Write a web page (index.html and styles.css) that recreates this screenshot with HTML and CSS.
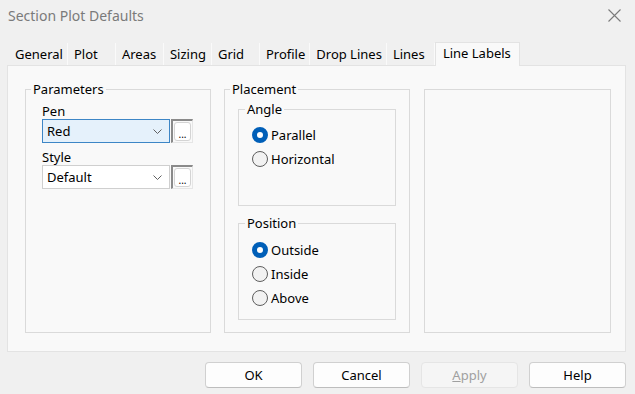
FILE: index.html
```html
<!doctype html>
<html lang="en">
<head>
	<meta charset="UTF-8">
	<title>Section Plot Defaults</title>
	<link rel="stylesheet" href="styles.css">
</head>
<body>
	<div class="dialog">
		<div class="titlebar">
			<span class="title">Section Plot Defaults</span>
			<svg class="close" width="13" height="13" viewBox="0 0 13 13"><path d="M0.5 0.5L12.5 12.5M12.5 0.5L0.5 12.5" stroke="#7a7a7a" stroke-width="1.1" fill="none"/></svg>
		</div>
		<div class="tabs">
			<span class="tab">General</span>
			<span class="tab">Plot</span>
			<span class="tab">Areas</span>
			<span class="tab">Sizing</span>
			<span class="tab">Grid</span>
			<span class="tab">Profile</span>
			<span class="tab">Drop Lines</span>
			<span class="tab">Lines</span>
			<span class="tab active">Line Labels</span>
		</div>
		<div class="panel">
			<fieldset class="group params">
				<legend>Parameters</legend>
				<div class="params-body">
					<div class="label">Pen</div>
					<div class="combo-row">
						<div class="combo focus">
							<span>Red</span>
							<svg width="9" height="5" viewBox="0 0 9 5"><path d="M0.5 0.5L4.5 4.5L8.5 0.5" stroke="#606060" fill="none"/></svg>
						</div>
						<div class="more"><span>...</span></div>
					</div>
					<div class="label gap">Style</div>
					<div class="combo-row">
						<div class="combo">
							<span>Default</span>
							<svg width="9" height="5" viewBox="0 0 9 5"><path d="M0.5 0.5L4.5 4.5L8.5 0.5" stroke="#606060" fill="none"/></svg>
						</div>
						<div class="more"><span>...</span></div>
					</div>
				</div>
			</fieldset>
			<fieldset class="group placement">
				<legend>Placement</legend>
				<div class="placement-body">
					<fieldset class="sub angle">
						<legend>Angle</legend>
						<div class="radios">
							<div class="radio"><span class="dot on"></span>Parallel</div>
							<div class="radio"><span class="dot"></span>Horizontal</div>
						</div>
					</fieldset>
					<fieldset class="sub position">
						<legend>Position</legend>
						<div class="radios">
							<div class="radio"><span class="dot on"></span>Outside</div>
							<div class="radio"><span class="dot"></span>Inside</div>
							<div class="radio"><span class="dot"></span>Above</div>
						</div>
					</fieldset>
				</div>
			</fieldset>
			<fieldset class="group empty"></fieldset>
		</div>
		<div class="buttons">
			<button class="btn">OK</button>
			<button class="btn">Cancel</button>
			<button class="btn disabled"><u>A</u>pply</button>
			<button class="btn">Help</button>
		</div>
	</div>
</body>
</html>
```
FILE: styles.css
```css
* {
	box-sizing: border-box;
}
body {
	margin: 0;
	background-color: #f0f0f0;
	font-family: "Noto Sans", "Liberation Sans", sans-serif;
	font-size: 13px;
	color: #000;
}
.dialog {
	width: 635px;
	height: 394px;
}
.titlebar {
	height: 30px;
	display: flex;
	align-items: center;
	justify-content: space-between;
	padding: 0 14px 0 8px;
}
.title {
	font-size: 14px;
	color: #7a7a7a;
}
.close {
	display: block;
}
/* tabs */
.tabs {
	display: flex;
	align-items: flex-end;
	height: 23px;
	margin: 12px 0 0 8px;
}
.tab {
	height: 22px;
	line-height: 22px;
	min-width: 48px;
	padding: 0 4px 0 6px;
	white-space: nowrap;
	border-right: 1px solid #fafafa;
}
.tab:first-child {
	padding-left: 7px;
}
.tab.active {
	position: relative;
	z-index: 1;
	height: 24px;
	line-height: 21px;
	margin-bottom: -1px;
	padding: 0 8px 2px 7px;
	background-color: #f9f9f9;
	border: 1px solid #e3e3e3;
	border-bottom: none;
}
/* panel */
.panel {
	display: flex;
	align-items: flex-start;
	width: 619px;
	height: 287px;
	margin-left: 7px;
	padding: 15px 0 0 17px;
	background-color: #f9f9f9;
	border: 1px solid #e3e3e3;
}
fieldset {
	margin: 0;
	padding: 0;
	min-width: 0;
	border: 1px solid #dadada;
}
legend {
	padding: 0 2px;
	line-height: 16px;
}
.group {
	width: 186px;
	height: 252px;
}
.group legend {
	margin-left: 5px;
}
.placement {
	margin-left: 13px;
}
.empty {
	width: 187px;
	height: 244px;
	margin: 8px 0 0 14px;
}
.params-body {
	padding: 6px 0 0 16px;
}
.label {
	line-height: 16px;
}
.label.gap {
	margin-top: 6px;
}
.combo-row {
	display: flex;
	gap: 1px;
}
.combo {
	width: 128px;
	height: 24px;
	display: flex;
	align-items: center;
	justify-content: space-between;
	padding: 0 7px 0 4px;
	background-color: #fff;
	border: 1px solid #cfcfcf;
}
.combo.focus {
	background-color: #e5f1fb;
	border-color: #3d86c6;
}
.combo svg {
	display: block;
}
.more {
	width: 22px;
	height: 24px;
	padding: 1px;
	border-top: 2px solid #8a8a8a;
	border-left: 2px solid #8a8a8a;
	border-right: 1px solid #e6e6e6;
	border-bottom: 1px solid #e6e6e6;
}
.more span {
	display: flex;
	align-items: flex-end;
	justify-content: center;
	height: 100%;
	font-size: 10px;
	line-height: 12px;
	background-color: #fff;
	border: 1px solid #d4d4d4;
	border-radius: 3px;
}
/* placement */
.placement-body {
	padding: 4px 0 0 13px;
}
.sub {
	width: 158px;
	height: 105px;
}
.sub legend {
	margin-left: 6px;
}
.position {
	margin-top: 9px;
}
.angle .radios {
	padding: 6px 0 0 13px;
}
.position .radios {
	padding: 7px 0 0 13px;
}
.radio {
	display: flex;
	align-items: center;
	gap: 3px;
	height: 24px;
}
.dot {
	width: 16px;
	height: 16px;
	border-radius: 50%;
	background-color: #f2f2f2;
	border: 1px solid #5e5e5e;
}
.dot.on {
	background-color: #fff;
	border: 5px solid #005fb8;
}
/* buttons */
.buttons {
	display: flex;
	justify-content: flex-end;
	gap: 11px;
	margin-top: 10px;
	padding-right: 9px;
}
.btn {
	width: 97px;
	height: 26px;
	padding: 0;
	font-family: "Noto Sans", "Liberation Sans", sans-serif;
	font-size: 13px;
	color: #000;
	background-color: #fdfdfd;
	border: 1px solid #d0d0d0;
	border-bottom-color: #bdbdbd;
	border-radius: 4px;
}
.btn.disabled {
	color: #a0a0a0;
	background-color: #f5f5f5;
	border-color: #e5e5e5;
}
```
